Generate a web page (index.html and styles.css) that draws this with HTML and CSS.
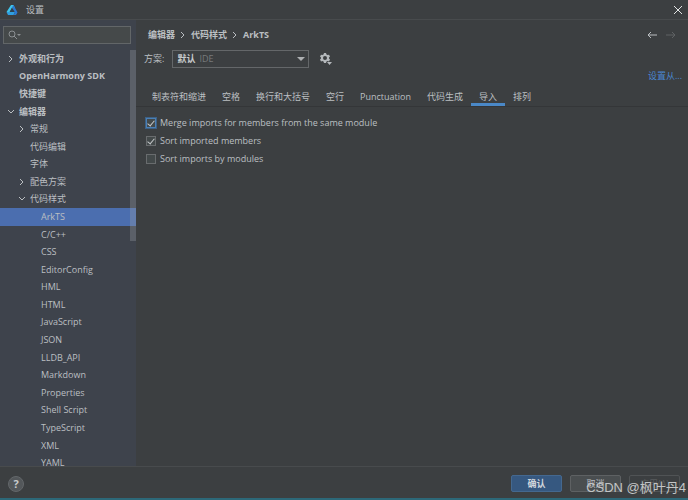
FILE: index.html
```html
<!DOCTYPE html>
<html lang="zh-CN">
<head>
<meta charset="utf-8">
<meta name="viewport" content="width=device-width, initial-scale=1">
<title>设置</title>
<link rel="stylesheet" href="styles.css">
</head>
<body>
<div class="window">
  <header class="titlebar">
    <svg class="logo" viewBox="0 0 24 24" aria-hidden="true">
      <path d="M10 2h5l3 6-4 2-2-3-5 9H1z" fill="#3fc4ea"/>
      <path d="M15 2l8 15-3 5h-5l3-5-6-10z" fill="#2b78d0"/>
      <path d="M1 16h17l-3 6H4z" fill="#2f9fe0"/>
      <path d="M12 8l4 8H8z" fill="#2c4152"/>
    </svg>
    <h1 class="title">设置</h1>
    <button class="icon-button close" aria-label="关闭">
      <svg viewBox="0 0 10 8"><path d="M1 0l8 8M9 0L1 8"/></svg>
    </button>
  </header>

  <div class="body">
    <aside class="sidebar">
      <label class="search">
        <svg viewBox="0 0 14 10" aria-hidden="true"><circle cx="4" cy="4" r="3"/><path d="M6 6l3 3"/><path class="solid" d="M9 4h4l-2 2z"/></svg>
        <input type="search" aria-label="搜索设置">
      </label>
      <nav class="tree-area">
        <ul class="tree">
          <li class="node top"><svg class="chevron" viewBox="0 0 8 8"><path d="M2 1l3 3-3 3"/></svg><a href="#">外观和行为</a></li>
          <li class="node top"><a href="#">OpenHarmony SDK</a></li>
          <li class="node top"><a href="#">快捷键</a></li>
          <li class="node top"><svg class="chevron" viewBox="0 0 8 8"><path d="M1 2l3 3 3-3"/></svg><a href="#">编辑器</a></li>
          <li class="node mid"><svg class="chevron" viewBox="0 0 8 8"><path d="M2 1l3 3-3 3"/></svg><a href="#">常规</a></li>
          <li class="node mid"><a href="#">代码编辑</a></li>
          <li class="node mid"><a href="#">字体</a></li>
          <li class="node mid"><svg class="chevron" viewBox="0 0 8 8"><path d="M2 1l3 3-3 3"/></svg><a href="#">配色方案</a></li>
          <li class="node mid"><svg class="chevron" viewBox="0 0 8 8"><path d="M1 2l3 3 3-3"/></svg><a href="#">代码样式</a></li>
          <li class="node leaf selected"><a href="#" aria-current="page">ArkTS</a></li>
          <li class="node leaf"><a href="#">C/C++</a></li>
          <li class="node leaf"><a href="#">CSS</a></li>
          <li class="node leaf"><a href="#">EditorConfig</a></li>
          <li class="node leaf"><a href="#">HML</a></li>
          <li class="node leaf"><a href="#">HTML</a></li>
          <li class="node leaf"><a href="#">JavaScript</a></li>
          <li class="node leaf"><a href="#">JSON</a></li>
          <li class="node leaf"><a href="#">LLDB_API</a></li>
          <li class="node leaf"><a href="#">Markdown</a></li>
          <li class="node leaf"><a href="#">Properties</a></li>
          <li class="node leaf"><a href="#">Shell Script</a></li>
          <li class="node leaf"><a href="#">TypeScript</a></li>
          <li class="node leaf"><a href="#">XML</a></li>
          <li class="node leaf"><a href="#">YAML</a></li>
        </ul>
        <div class="scroll-thumb"></div>
      </nav>
    </aside>

    <main class="content">
      <div class="crumb-row">
        <nav class="crumbs">
          <a href="#">编辑器</a>
          <svg class="chevron" viewBox="0 0 8 8"><path d="M2 1l3 3-3 3"/></svg>
          <a href="#">代码样式</a>
          <svg class="chevron" viewBox="0 0 8 8"><path d="M2 1l3 3-3 3"/></svg>
          <span>ArkTS</span>
        </nav>
        <div class="history">
          <button class="icon-button" aria-label="后退"><svg viewBox="0 0 10 8"><path d="M10 4H1M4 1L1 4l3 3"/></svg></button>
          <button class="icon-button" aria-label="前进" disabled><svg viewBox="0 0 10 8"><path d="M0 4h9M6 1l3 3-3 3"/></svg></button>
        </div>
      </div>

      <div class="scheme-row">
        <label for="scheme">方案:</label>
        <div class="select">
          <select id="scheme"><option>默认</option></select>
          <span class="scope">IDE</span>
          <svg class="arrow" viewBox="0 0 8 6" aria-hidden="true"><path d="M0 1h8L4 5z"/></svg>
        </div>
        <button class="icon-button gear" aria-label="方案操作">
          <svg viewBox="0 0 12 12">
            <path class="gear-body" fill-rule="evenodd" d="M4 0h2l.5 1.500 1 .6L9 1.700l1 1.800-1 1v1.100l1 1-1 1.800-1.500-.4-1 .6L6 10H4l-.5-1.400-1-.6-1.500.4-1-1.800 1-1V4.500l-1-1 1-1.800 1.500.4 1-.6zM5 3a2 2 0 1 0 0 4 2 2 0 0 0 0-4z"/>
            <path class="gear-body" d="M7 9h5l-2.500 3z"/>
          </svg>
        </button>
      </div>

      <div class="link-row"><a href="#">设置从...</a></div>

      <div class="tabs" role="tablist">
        <button class="tab" role="tab">制表符和缩进</button>
        <button class="tab" role="tab">空格</button>
        <button class="tab" role="tab">换行和大括号</button>
        <button class="tab" role="tab">空行</button>
        <button class="tab" role="tab">Punctuation</button>
        <button class="tab" role="tab">代码生成</button>
        <button class="tab active" role="tab" aria-selected="true">导入</button>
        <button class="tab" role="tab">排列</button>
      </div>

      <div class="options">
        <label class="option"><input class="focused" type="checkbox" checked>Merge imports for members from the same module</label>
        <label class="option"><input type="checkbox" checked>Sort imported members</label>
        <label class="option"><input type="checkbox">Sort imports by modules</label>
      </div>
    </main>
  </div>

  <footer class="footer">
    <button class="help" aria-label="帮助">?</button>
    <div class="actions">
      <button class="action primary">确认</button>
      <button class="action">取消</button>
      <button class="action disabled" disabled>应用(A)</button>
    </div>
    <span class="watermark">CSDN @枫叶丹4</span>
  </footer>
</div>
</body>
</html>
```

FILE: styles.css
```css
* {
  box-sizing: border-box;
}

body {
  margin: 0;
  background: #3c3f41;
  color: #bbbfc2;
  font: 9px/12px "Open Sans", "Noto Sans CJK SC", sans-serif;
}

a {
  color: inherit;
  text-decoration: none;
}

button,
input,
select {
  font: inherit;
  color: inherit;
}

svg {
  display: block;
  flex: none;
  fill: none;
  stroke: currentColor;
}

.window {
  display: flex;
  flex-direction: column;
  height: 100vh;
  border-bottom: 2px solid #2c6878;
}

.titlebar {
  display: flex;
  align-items: center;
  gap: 8px;
  height: 20px;
  padding: 0 5px 0 6px;
  border-bottom: 1px solid #484b4d;
}

.logo {
  width: 12px;
  height: 12px;
  stroke: none;
}

.title {
  flex: 1;
  margin: 0;
  font-size: 9px;
  font-weight: 400;
}

.icon-button {
  display: flex;
  padding: 0;
  border: 0;
  background: none;
}

.icon-button svg {
  width: 10px;
  height: 8px;
}

.icon-button:disabled {
  color: #5f6264;
}

.close {
  color: #e2e4e5;
}

.body {
  display: flex;
  flex: 1;
  min-height: 0;
}

.sidebar {
  display: flex;
  flex-direction: column;
  width: 136px;
  background: #3e434c;
}

.search {
  display: flex;
  align-items: center;
  height: 18px;
  margin: 6px 5px 6px 3px;
  padding-left: 4px;
  border: 1px solid #626668;
  background: #45494a;
  color: #8b8f92;
}

.search svg {
  width: 14px;
  height: 10px;
}

.search .solid {
  fill: currentColor;
  stroke: none;
}

.search input {
  flex: 1;
  min-width: 0;
  padding: 0;
  border: 0;
  outline: 0;
  background: none;
}

.tree-area {
  position: relative;
  display: flex;
  flex: 1;
  min-height: 0;
  overflow: hidden;
}

.tree {
  display: flex;
  flex: 1;
  flex-direction: column;
  margin: 0 0 -6px;
  padding: 0;
  list-style: none;
}

.node {
  display: flex;
  flex: 1;
  align-items: center;
  justify-content: flex-start;
  min-height: 0;
}

.node .chevron {
  margin: 0 4px 0 -12px;
}

.chevron {
  width: 8px;
  height: 8px;
}

.top {
  padding-left: 19px;
  font-weight: 700;
}

.mid {
  padding-left: 30px;
}

.leaf {
  padding-left: 41px;
}

.selected {
  background: #4b6eaf;
}

.scroll-thumb {
  position: absolute;
  top: 0;
  right: 0;
  width: 6px;
  height: 46%;
  background: rgb(160 165 170 / 30%);
}

.content {
  flex: 1;
  min-width: 0;
}

.crumb-row {
  display: flex;
  align-items: center;
  justify-content: space-between;
  height: 30px;
  padding: 0 12px;
}

.crumbs {
  display: flex;
  align-items: center;
  gap: 4px;
  font-weight: 700;
}

.history {
  display: flex;
  gap: 9px;
}

.scheme-row {
  display: flex;
  align-items: center;
  height: 18px;
  padding-left: 8px;
}

.select {
  position: relative;
  width: 137px;
  margin: 0 11px 0 8px;
}

.select select {
  display: block;
  width: 100%;
  height: 18px;
  padding: 0 4px;
  border: 1px solid #646769;
  border-radius: 0;
  appearance: none;
  background: #3c3f41;
  color: #c8cbcd;
  font-weight: 700;
}

.scope {
  position: absolute;
  top: 3px;
  left: 27px;
  color: #777a7c;
  pointer-events: none;
}

.arrow {
  position: absolute;
  top: 6px;
  right: 4px;
  width: 8px;
  height: 6px;
  fill: #adb0b2;
  stroke: none;
  pointer-events: none;
}

.gear svg {
  width: 12px;
  height: 12px;
}

.gear-body {
  fill: #b4b8bb;
  stroke: none;
}

.link-row {
  padding: 2px 6px;
  color: #4a86d0;
  text-align: right;
}

.tabs {
  display: flex;
  height: 23px;
  padding-left: 8px;
  border-bottom: 1px solid #343638;
}

.tab {
  padding: 6px 8px 0;
  border: 0;
  border-bottom: 3px solid transparent;
  background: none;
  white-space: nowrap;
}

.tab.active {
  border-bottom-color: #4a88c7;
}

.options {
  display: flex;
  flex-direction: column;
  align-items: flex-start;
  gap: 6px;
  padding: 10px;
}

.option {
  display: flex;
  align-items: center;
  gap: 4px;
}

.option input {
  display: grid;
  place-items: center;
  width: 10px;
  height: 10px;
  margin: 0;
  border: 1px solid #696c6e;
  appearance: none;
  background: #43494a;
}

.option input:checked::before {
  width: 3px;
  height: 6px;
  margin-bottom: 2px;
  border: solid #c4c7c9;
  border-width: 0 1px 1px 0;
  content: "";
  transform: rotate(40deg);
}

.option .focused {
  border-color: #4a7fb5;
  outline: 1px solid #3d6185;
}

.footer {
  position: relative;
  display: flex;
  align-items: center;
  justify-content: space-between;
  height: 32px;
  padding: 2px 8px 0;
  border-top: 1px solid #484b4d;
}

.help {
  width: 16px;
  height: 16px;
  padding: 0;
  border: 1px solid #63676a;
  border-radius: 50%;
  background: #53575a;
  color: #c8cbcd;
  font-size: 11px;
  font-weight: 700;
}

.actions {
  display: flex;
  gap: 8px;
}

.action {
  width: 51px;
  height: 17px;
  padding: 0;
  border: 1px solid #5e6163;
  border-radius: 2px;
  background: #4a4e50;
}

.primary {
  border-color: #44688f;
  background: #365880;
  color: #d0d6dc;
  font-weight: 700;
}

.disabled {
  border-color: #505355;
  background: none;
  color: #585b5d;
}

.watermark {
  position: absolute;
  right: 2px;
  bottom: 0;
  color: #c3c5c6;
  font: 13px/20px "Liberation Sans", "Noto Sans CJK SC", sans-serif;
  pointer-events: none;
}
```
